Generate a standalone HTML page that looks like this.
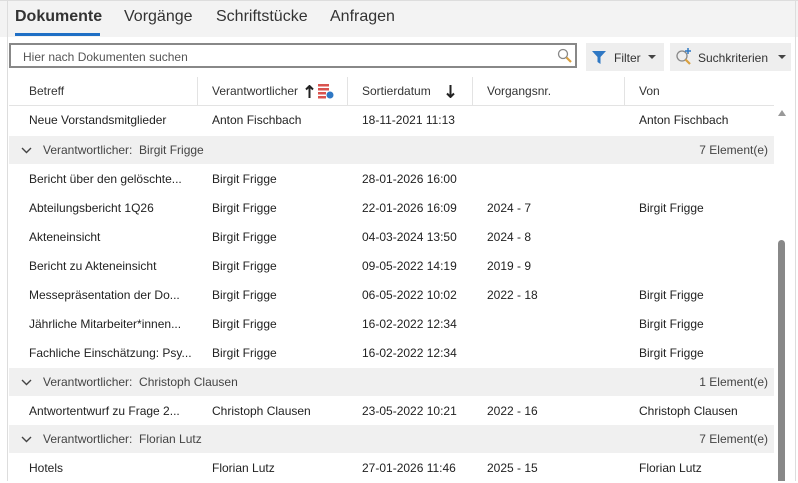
<!DOCTYPE html><html><head><style>
body{margin:0;width:798px;height:481px;overflow:hidden;background:#fff;font-family:"Liberation Sans",sans-serif;color:#222;font-size:12px;position:relative}
.top{position:absolute;left:0;top:0;width:798px;height:36px;background:#f3f3f3;border-top:1px solid #ddd}
.lb{position:absolute;left:7px;top:0;width:1px;height:481px;background:#ddd}
.rb{position:absolute;left:795px;top:0;width:1px;height:481px;background:#ddd}
.tab{position:absolute;top:8px;font-size:16px;color:#333}
.ul{position:absolute;left:15px;top:33px;width:85px;height:3px;background:#1f6fc5}
.search{position:absolute;left:9px;top:43px;width:568px;height:25px;border:2px solid #888;box-sizing:border-box}
.search span{position:absolute;left:12px;top:5px;color:#555;font-size:12px}
.btn{position:absolute;top:43px;height:28px;background:#eee;font-size:12px;color:#333}
.h{position:absolute;top:84px;font-size:12px;color:#333}
.sep{position:absolute;top:77px;width:1px;height:29px;background:#e3e3e3}
.hl{position:absolute;left:9px;top:105px;width:765px;height:1px;background:#e3e3e3}
.r{position:absolute;left:0;width:780px;height:29px}
.r span{position:absolute;top:7px;white-space:nowrap}
.g{position:absolute;left:9px;width:765px;height:28px;background:#f0f0f0;color:#444}
.g span{position:absolute;top:7px}
.g svg{position:absolute;left:12px;top:11px}
.sb{position:absolute;left:778px;top:240px;width:7px;height:241px;background:#888;border-radius:4px 4px 0 0}
</style></head><body>
<div class="top"></div><div class="lb"></div><div class="rb"></div>
<div class="tab" style="left:15px;font-weight:bold">Dokumente</div>
<div class="tab" style="left:124px">Vorgänge</div>
<div class="tab" style="left:216px">Schriftstücke</div>
<div class="tab" style="left:330px">Anfragen</div>
<div class="ul"></div>
<div class="search"><span>Hier nach Dokumenten suchen</span>
<svg style="position:absolute;left:546px;top:3px" width="16" height="16"><circle cx="6" cy="6" r="4.5" fill="none" stroke="#888" stroke-width="1.3"/><line x1="9.5" y1="9.5" x2="14" y2="14" stroke="#d9a040" stroke-width="2.2"/></svg></div>
<div class="btn" style="left:586px;width:78px"><svg style="position:absolute;left:6px;top:8px" width="14" height="13"><path d="M0 0H14L8.5 6V13L5.5 11V6Z" fill="#2f78c4"/></svg><span style="position:absolute;left:28px;top:8px">Filter</span><svg style="position:absolute;left:62px;top:12px" width="8" height="5"><path d="M0 0H8L4 4Z" fill="#444"/></svg></div>
<div class="btn" style="left:670px;width:121px"><svg style="position:absolute;left:5px;top:5px" width="18" height="18"><circle cx="7" cy="8" r="5" fill="none" stroke="#888" stroke-width="1.3"/><line x1="10.5" y1="11.5" x2="15" y2="16" stroke="#d9a040" stroke-width="2.2"/><path d="M13 0V6M10 3H16" stroke="#2f78c4" stroke-width="1.5"/></svg><span style="position:absolute;left:28px;top:8px">Suchkriterien</span><svg style="position:absolute;left:108px;top:12px" width="8" height="5"><path d="M0 0H8L4 4Z" fill="#444"/></svg></div>
<div class="h" style="left:29px">Betreff</div>
<div class="sep" style="left:197px"></div>
<div class="h" style="left:212px">Verantwortlicher</div>
<svg style="position:absolute;left:305px;top:85px" width="9" height="13"><path d="M4.5 1V13M1 4.5L4.5 1L8 4.5" fill="none" stroke="#222" stroke-width="2"/></svg>
<svg style="position:absolute;left:318px;top:84px" width="16" height="15"><rect x="0" y="0" width="11" height="2.5" fill="#d9534f"/><rect x="0" y="4" width="11" height="2.5" fill="#d9534f"/><rect x="0" y="8" width="8" height="2.5" fill="#d9534f"/><rect x="0" y="12" width="8" height="2.5" fill="#d9534f"/><circle cx="12" cy="11" r="3.5" fill="#2f78c4"/></svg>
<div class="sep" style="left:347px"></div>
<div class="h" style="left:362px">Sortierdatum</div>
<svg style="position:absolute;left:446px;top:85px" width="9" height="13"><path d="M4.5 0V12M1 8.5L4.5 12L8 8.5" fill="none" stroke="#222" stroke-width="2"/></svg>
<div class="sep" style="left:472px"></div>
<div class="h" style="left:487px">Vorgangsnr.</div>
<div class="sep" style="left:624px"></div>
<div class="h" style="left:639px">Von</div>
<div class="hl"></div>
<svg style="position:absolute;left:778px;top:110px" width="8" height="6"><path d="M0 6L4 0L8 6Z" fill="#999"/></svg>

<div class="r" style="top:106px"><span style="left:29px">Neue Vorstandsmitglieder</span><span style="left:212px">Anton Fischbach</span><span style="left:362px">18-11-2021 11:13</span><span style="left:639px">Anton Fischbach</span></div>
<div class="g" style="top:136px"><svg width="11" height="7"><path d="M1 1L5.5 5.5L10 1" fill="none" stroke="#444" stroke-width="1.4"/></svg><span style="left:34px">Verantwortlicher:&nbsp; Birgit Frigge</span><span style="right:6px">7 Element(e)</span></div>
<div class="r" style="top:165px"><span style="left:29px">Bericht über den gelöschte...</span><span style="left:212px">Birgit Frigge</span><span style="left:362px">28-01-2026 16:00</span></div>
<div class="r" style="top:194px"><span style="left:29px">Abteilungsbericht 1Q26</span><span style="left:212px">Birgit Frigge</span><span style="left:362px">22-01-2026 16:09</span><span style="left:487px">2024 - 7</span><span style="left:639px">Birgit Frigge</span></div>
<div class="r" style="top:223px"><span style="left:29px">Akteneinsicht</span><span style="left:212px">Birgit Frigge</span><span style="left:362px">04-03-2024 13:50</span><span style="left:487px">2024 - 8</span></div>
<div class="r" style="top:252px"><span style="left:29px">Bericht zu Akteneinsicht</span><span style="left:212px">Birgit Frigge</span><span style="left:362px">09-05-2022 14:19</span><span style="left:487px">2019 - 9</span></div>
<div class="r" style="top:281px"><span style="left:29px">Messepräsentation der Do...</span><span style="left:212px">Birgit Frigge</span><span style="left:362px">06-05-2022 10:02</span><span style="left:487px">2022 - 18</span><span style="left:639px">Birgit Frigge</span></div>
<div class="r" style="top:310px"><span style="left:29px">Jährliche Mitarbeiter*innen...</span><span style="left:212px">Birgit Frigge</span><span style="left:362px">16-02-2022 12:34</span><span style="left:639px">Birgit Frigge</span></div>
<div class="r" style="top:339px"><span style="left:29px">Fachliche Einschätzung: Psy...</span><span style="left:212px">Birgit Frigge</span><span style="left:362px">16-02-2022 12:34</span><span style="left:639px">Birgit Frigge</span></div>
<div class="g" style="top:368px"><svg width="11" height="7"><path d="M1 1L5.5 5.5L10 1" fill="none" stroke="#444" stroke-width="1.4"/></svg><span style="left:34px">Verantwortlicher:&nbsp; Christoph Clausen</span><span style="right:6px">1 Element(e)</span></div>
<div class="r" style="top:397px"><span style="left:29px">Antwortentwurf zu Frage 2...</span><span style="left:212px">Christoph Clausen</span><span style="left:362px">23-05-2022 10:21</span><span style="left:487px">2022 - 16</span><span style="left:639px">Christoph Clausen</span></div>
<div class="g" style="top:425px"><svg width="11" height="7"><path d="M1 1L5.5 5.5L10 1" fill="none" stroke="#444" stroke-width="1.4"/></svg><span style="left:34px">Verantwortlicher:&nbsp; Florian Lutz</span><span style="right:6px">7 Element(e)</span></div>
<div class="r" style="top:454px"><span style="left:29px">Hotels</span><span style="left:212px">Florian Lutz</span><span style="left:362px">27-01-2026 11:46</span><span style="left:487px">2025 - 15</span><span style="left:639px">Florian Lutz</span></div>
<div class="sb"></div>
</body></html>
